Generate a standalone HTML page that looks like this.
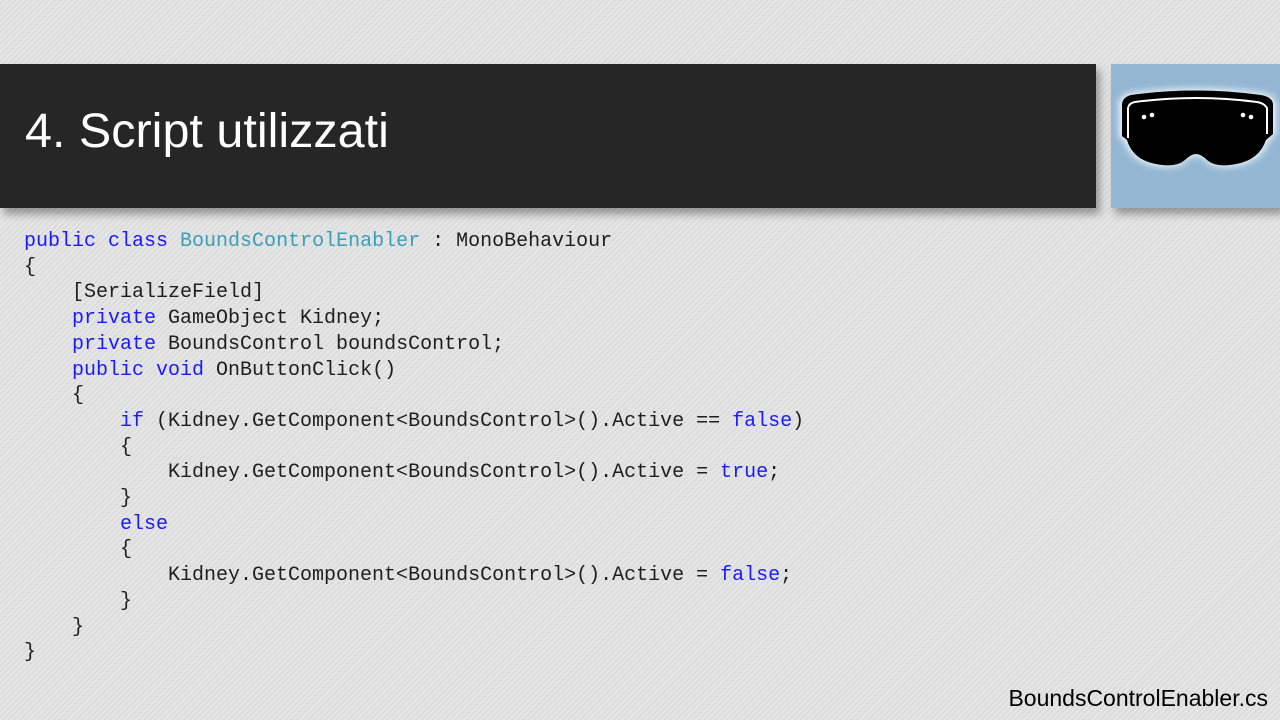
<!DOCTYPE html>
<html><head><meta charset="utf-8"><style>
html,body{margin:0;padding:0}
body{width:1280px;height:720px;overflow:hidden;position:relative;
background:repeating-linear-gradient(135deg,#e6e6e6 0 2px,#dcdcdc 2px 4px);font-family:"Liberation Sans",sans-serif}
.bar{position:absolute;left:0;top:64px;width:1096px;height:144px;background:#262626;box-shadow:4px 6px 8px rgba(0,0,0,.35)}
.title{position:absolute;left:25px;top:101px;color:#fff;font-size:48.5px;line-height:60px;white-space:nowrap}
.logo{position:absolute;left:1111px;top:64px;width:169px;height:144px;background:#93b6d3;box-shadow:4px 6px 8px rgba(0,0,0,.35)}
pre{position:absolute;left:24px;top:229px;margin:0;font-family:"Liberation Mono",monospace;font-size:20px;line-height:25.7px;color:#1e1e1e}
.k{color:#1a1aff}.t{color:#3a9fb6}
.fn{position:absolute;right:12px;top:685px;font-size:23px;color:#000}
</style></head><body>
<div class="bar"></div>
<div class="title">4. Script utilizzati</div>
<div class="logo">
<svg width="169" height="144" viewBox="0 0 169 144">
<defs><filter id="g" x="-30%" y="-30%" width="160%" height="160%"><feGaussianBlur stdDeviation="4"/></filter></defs>
<g id="sh">
<path d="M11 40 Q12 33 20 31 Q85 22 150 31 Q161 33 162 40 L162 70 L155 76 Q148 96 125 100 Q105 104 96 96 Q90 90 85 90 Q80 90 74 96 Q65 104 45 100 Q22 96 16 76 L11 72 Z" fill="#fff" filter="url(#g)" transform="scale(1.03) translate(-2.5 -2)"/>
</g>
<path d="M11 40 Q12 33 20 31 Q85 22 150 31 Q161 33 162 40 L162 70 L155 76 Q148 96 125 100 Q105 104 96 96 Q90 90 85 90 Q80 90 74 96 Q65 104 45 100 Q22 96 16 76 L11 72 Z" fill="#000"/>
<path d="M17 44 Q18 39 24 38 Q85 30 146 38 Q153 39 156 44 L156 70" stroke="#fff" stroke-width="2" fill="none"/>
<path d="M17 44 L17 74" stroke="#fff" stroke-width="2" fill="none"/>
<circle cx="33" cy="53" r="2.3" fill="#fff"/><circle cx="41" cy="51" r="2.3" fill="#fff"/>
<circle cx="132" cy="51" r="2.3" fill="#fff"/><circle cx="140" cy="53" r="2.3" fill="#fff"/>
</svg></div>
<pre><span class="k">public class</span> <span class="t">BoundsControlEnabler</span> : MonoBehaviour
{
    [SerializeField]
    <span class="k">private</span> GameObject Kidney;
    <span class="k">private</span> BoundsControl boundsControl;
    <span class="k">public void</span> OnButtonClick()
    {
        <span class="k">if</span> (Kidney.GetComponent&lt;BoundsControl&gt;().Active == <span class="k">false</span>)
        {
            Kidney.GetComponent&lt;BoundsControl&gt;().Active = <span class="k">true</span>;
        }
        <span class="k">else</span>
        {
            Kidney.GetComponent&lt;BoundsControl&gt;().Active = <span class="k">false</span>;
        }
    }
}</pre>
<div class="fn">BoundsControlEnabler.cs</div>
</body></html>
